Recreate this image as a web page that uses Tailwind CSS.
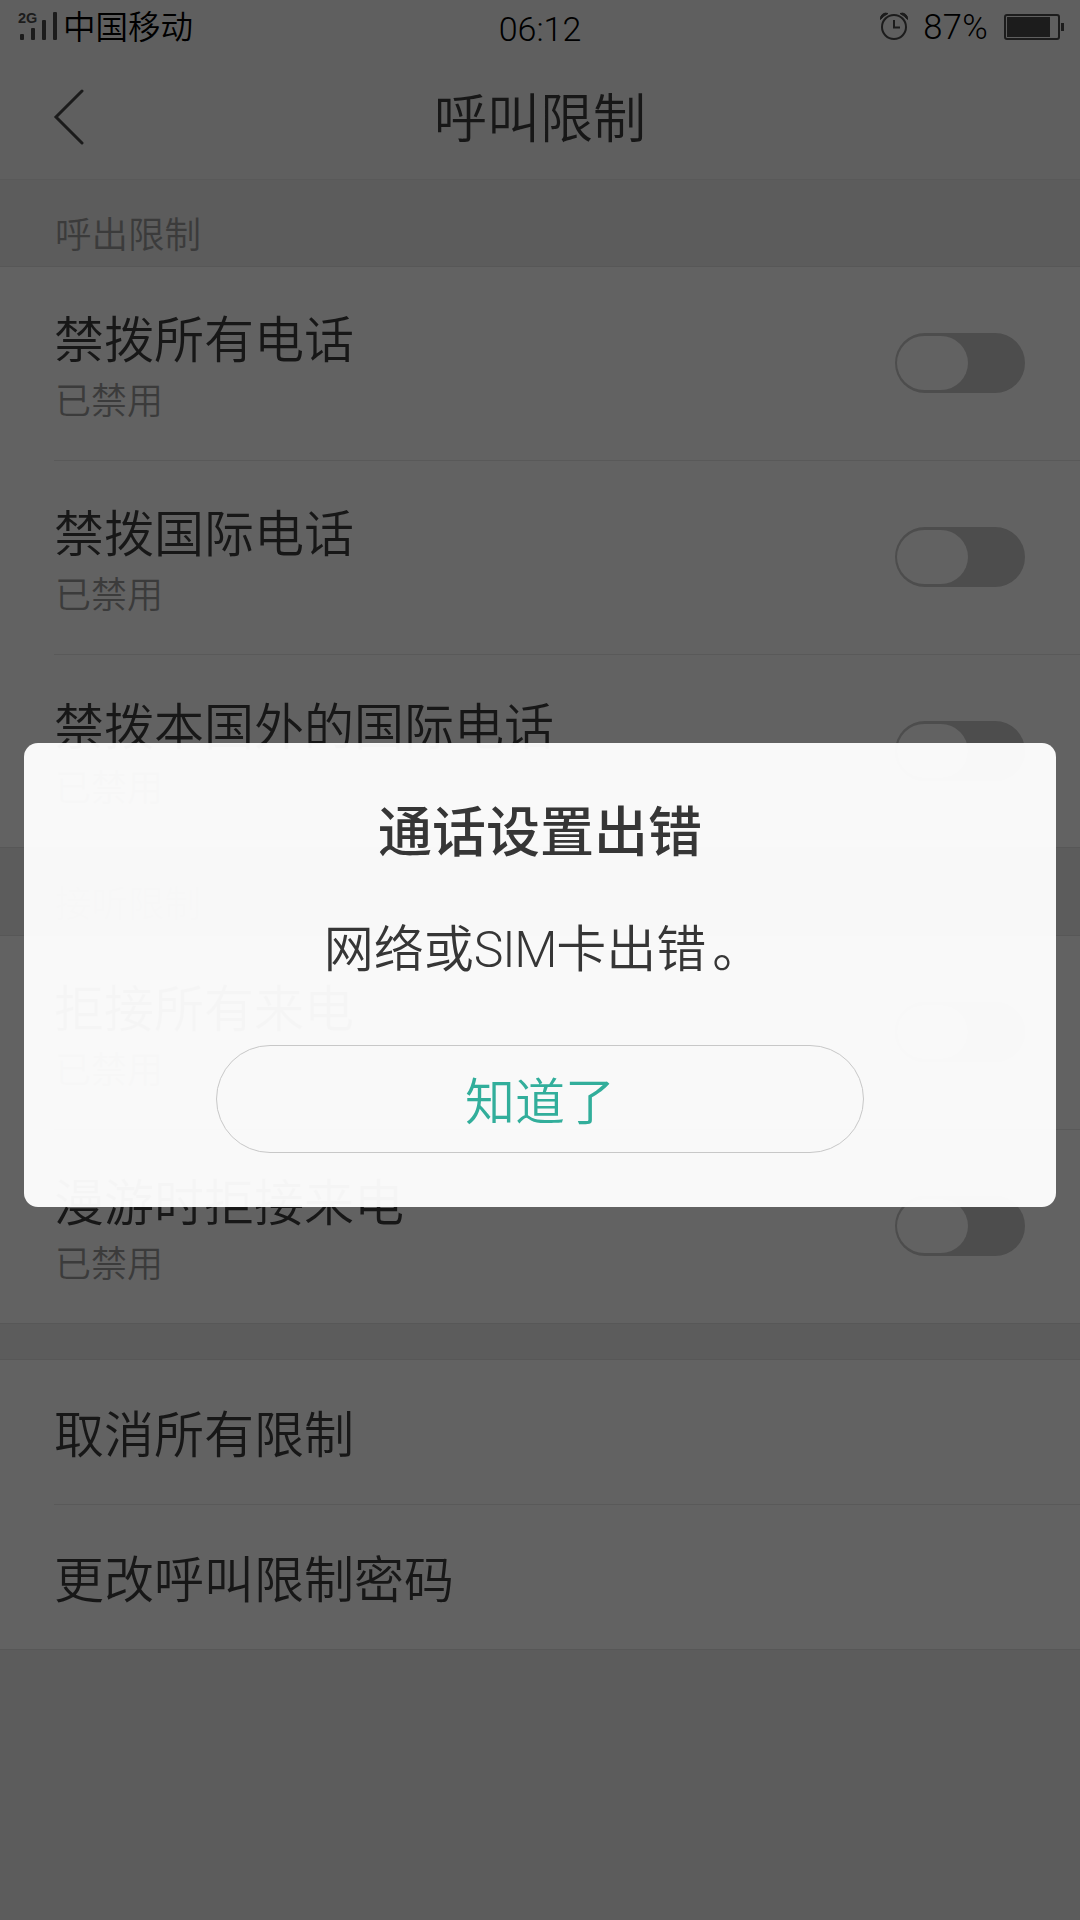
<!DOCTYPE html>
<html lang="zh-CN">
<head>
  <meta charset="UTF-8" />
  <meta name="viewport" content="width=device-width, initial-scale=1.0"/>
  <title>呼叫限制</title>
  <script src="https://cdn.jsdelivr.net/npm/@tailwindcss/browser@4"></script>
</head>
<body class="relative h-[1920px] overflow-hidden bg-[#5c5c5c] text-[#171717] font-[350] font-['Roboto','Noto_Sans_CJK_SC',sans-serif]">

  <!-- Status bar -->
  <div class="grid grid-cols-3 items-center h-[54px] bg-[#5f5f5f] pl-[18px] pr-4 text-black">
    <div class="flex items-center">
      <div class="relative w-10 h-[30px]">
        <span class="absolute left-0 -top-[3px] text-[14.5px] leading-[18px] font-bold font-['Liberation_Sans',sans-serif] text-[#1c1c1c]">2G</span>
        <svg class="w-10 h-[30px]" viewBox="0 0 40 30" fill="#1c1c1c">
          <rect x="2" y="22" width="4" height="6" rx="1"/>
          <rect x="13" y="16" width="4" height="12" rx="1"/>
          <rect x="24" y="8" width="4" height="20" rx="1"/>
          <rect x="35" y="0" width="4" height="28" rx="1"/>
        </svg>
      </div>
      <span class="ml-[5px] pt-[3px] text-[32.5px] leading-[51px]">中国移动</span>
    </div>
    <div class="text-center text-[34px] leading-[50px] pt-1 pr-0.5">06:12</div>
    <div class="flex items-center justify-end pb-0.5">
      <svg class="w-7 h-7" viewBox="0 0 28 28" fill="none" stroke="#1c1c1c" stroke-width="2">
        <circle cx="14" cy="15" r="12"/>
        <path d="M14 8v7.5h6"/>
        <path d="M0.5 7.5A5.5 5.5 0 0 1 8 1.5Q3 4 0.5 7.5zM27.5 7.5A5.5 5.5 0 0 0 20 1.5Q25 4 27.5 7.5z" fill="#1c1c1c" stroke-width="1"/>
      </svg>
      <span class="ml-[15px] pt-[3px] text-[34.5px] leading-[49px] tracking-[0.3px]">87%</span>
      <svg class="ml-4 mt-0.5 w-[60px] h-[26px]" viewBox="0 0 60 26">
        <rect x="1" y="1" width="54" height="24" rx="2" fill="none" stroke="#1c1c1c" stroke-width="2"/>
        <rect x="3" y="3" width="43" height="20" fill="#1c1c1c"/>
        <rect x="57" y="9" width="3" height="8" fill="#1c1c1c"/>
      </svg>
    </div>
  </div>

  <!-- Title bar -->
  <header class="relative flex items-center justify-center h-[126px] bg-[#5f5f5f] border-b border-[#595959]">
    <svg class="absolute left-[52px] top-[34px] w-8 h-[58px]" viewBox="0 0 32 58" fill="none" stroke="#1b1b1b" stroke-width="3" stroke-linecap="round">
      <path d="M30 3L4 29L30 55"/>
    </svg>
    <h1 class="pt-[7px] text-[53px] leading-[80px]">呼叫限制</h1>
  </header>

  <!-- Outgoing -->
  <h2 class="h-[87px] pl-[55px] pt-[29px] text-[36.5px] leading-[54px] text-[#3b3b3b] border-b border-[#575757]">呼出限制</h2>
  <ul class="bg-[#626262] pl-[54px]">
    <li class="flex items-center justify-between h-[194px] pr-[55px] border-b border-[#595959]">
      <div class="pt-2.5">
        <p class="text-[50px] leading-[66px]">禁拨所有电话</p>
        <p class="pl-px text-[36px] leading-[56px] text-[#3b3b3b]">已禁用</p>
      </div>
      <div class="mb-0.5 w-[130px] h-[60px] rounded-full bg-[#4d4d4d] pl-0.5 pt-[3px]">
        <div class="w-[71px] h-[54px] rounded-full bg-[#626262]"></div>
      </div>
    </li>
    <li class="flex items-center justify-between h-[194px] pr-[55px] border-b border-[#595959]">
      <div class="pt-2.5">
        <p class="text-[50px] leading-[66px]">禁拨国际电话</p>
        <p class="pl-px text-[36px] leading-[56px] text-[#3b3b3b]">已禁用</p>
      </div>
      <div class="mb-0.5 w-[130px] h-[60px] rounded-full bg-[#4d4d4d] pl-0.5 pt-[3px]">
        <div class="w-[71px] h-[54px] rounded-full bg-[#626262]"></div>
      </div>
    </li>
    <li class="flex items-center justify-between h-[192px] pr-[55px]">
      <div class="pt-2.5">
        <p class="text-[50px] leading-[66px]">禁拨本国外的国际电话</p>
        <p class="pl-px text-[36px] leading-[56px] text-[#3b3b3b]">已禁用</p>
      </div>
      <div class="w-[130px] h-[60px] rounded-full bg-[#4d4d4d] pl-0.5 pt-[3px]">
        <div class="w-[71px] h-[54px] rounded-full bg-[#626262]"></div>
      </div>
    </li>
  </ul>

  <!-- Incoming -->
  <h2 class="h-[89px] pl-[55px] pt-[30px] text-[36.5px] leading-[54px] text-[#3b3b3b] border-y border-[#575757]">接听限制</h2>
  <ul class="bg-[#626262] pl-[54px]">
    <li class="flex items-center justify-between h-[194px] pr-[55px] border-b border-[#595959]">
      <div class="pt-2.5">
        <p class="text-[50px] leading-[66px]">拒接所有来电</p>
        <p class="pl-px text-[36px] leading-[56px] text-[#3b3b3b]">已禁用</p>
      </div>
      <div class="mb-0.5 w-[130px] h-[60px] rounded-full bg-[#4d4d4d] pl-0.5 pt-[3px]">
        <div class="w-[71px] h-[54px] rounded-full bg-[#626262]"></div>
      </div>
    </li>
    <li class="flex items-center justify-between h-[193px] pr-[55px]">
      <div class="pt-2.5">
        <p class="text-[50px] leading-[66px]">漫游时拒接来电</p>
        <p class="pl-px text-[36px] leading-[56px] text-[#3b3b3b]">已禁用</p>
      </div>
      <div class="mb-0.5 w-[130px] h-[60px] rounded-full bg-[#4d4d4d] pl-0.5 pt-[3px]">
        <div class="w-[71px] h-[54px] rounded-full bg-[#626262]"></div>
      </div>
    </li>
  </ul>

  <!-- Spacer between groups -->
  <div class="h-[37px] border-y border-[#575757]"></div>

  <!-- Other actions -->
  <ul class="bg-[#626262] pl-[54px] border-b border-[#575757] text-[50px]">
    <li class="flex items-center h-[145px] pt-2 border-b border-[#595959]">取消所有限制</li>
    <li class="flex items-center h-[144px] pt-2">更改呼叫限制密码</li>
  </ul>

  <!-- Error dialog -->
  <div class="absolute left-6 top-[743px] flex flex-col items-center w-[1032px] h-[464px] rounded-[14px] bg-white/96 text-[#363636]">
    <h3 class="mt-[51px] text-[54px] leading-[80px] font-medium">通话设置出错</h3>
    <p class="mt-[38px] pl-1.5 text-[50px] leading-[76px]">网络或<span class="tracking-[-1.3px]">SIM</span>卡出错<span class="pl-1.5">。</span></p>
    <button class="mt-[57px] pt-[9px] w-[648px] h-[108px] rounded-full border border-[#c8c8c8] text-[50px] text-[#32ae9b]">知道了</button>
  </div>

</body>
</html>
